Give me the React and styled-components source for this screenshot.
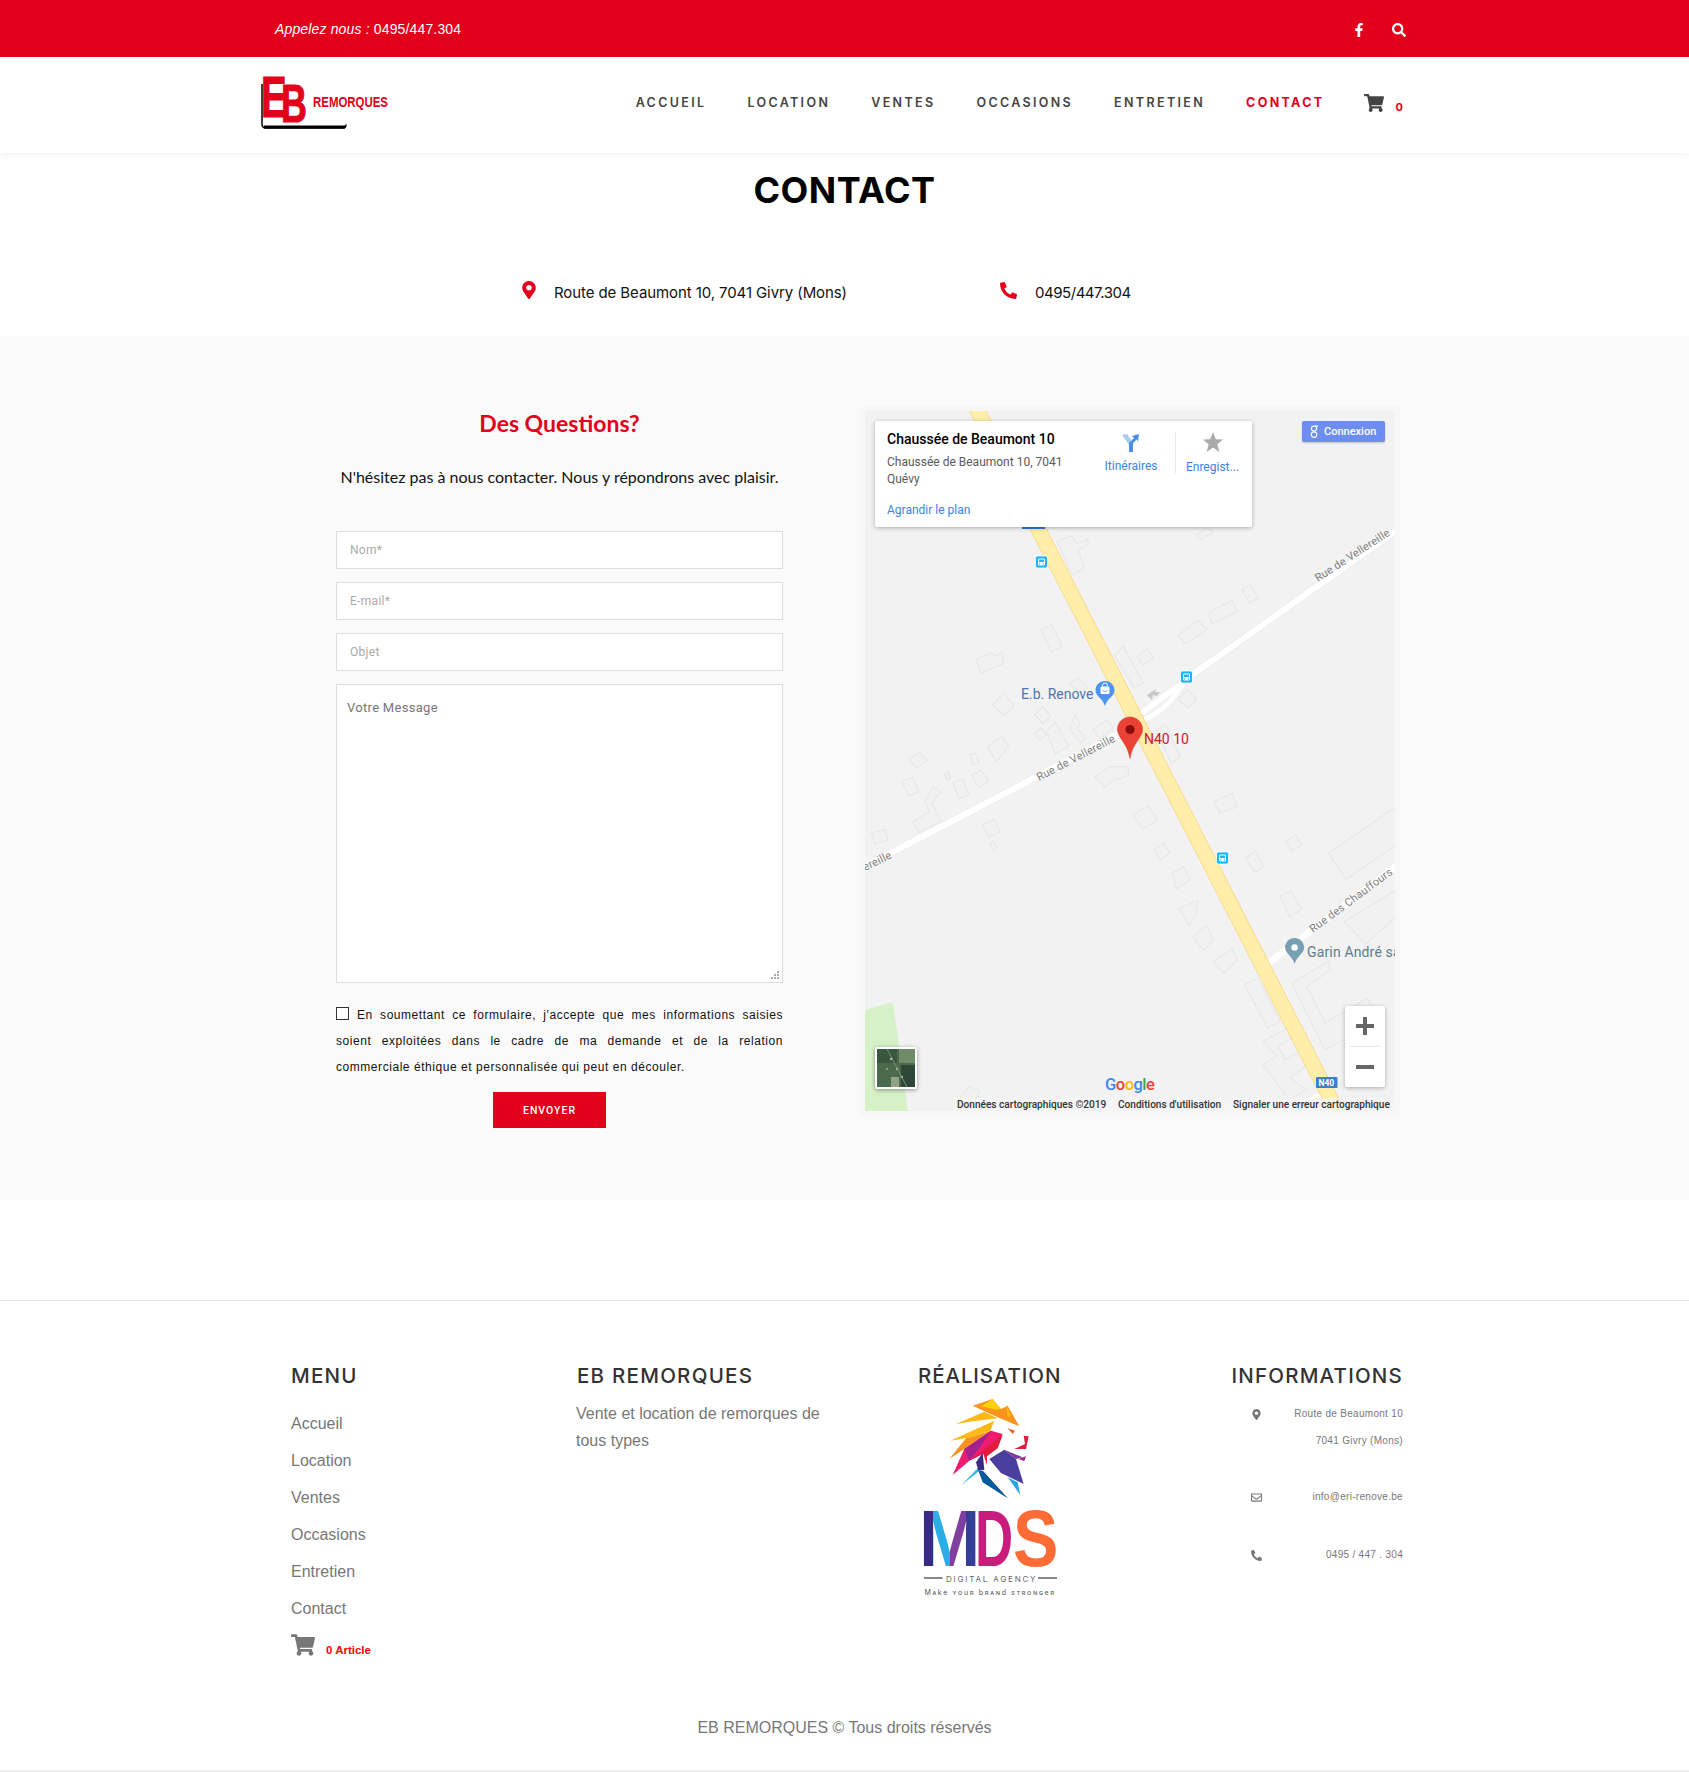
import React from "react";
import styled, { createGlobalStyle } from "styled-components";
import { FaFacebookF, FaSearch, FaShoppingCart, FaMapMarkerAlt, FaPhoneAlt, FaRegEnvelope } from "react-icons/fa";

const RED = "#e2001a";
const ARIAL = `"Liberation Sans", Arial, sans-serif`;
const GEO = `Inter, "Liberation Sans", sans-serif`;
const ROBOTO = `Roboto, "Liberation Sans", sans-serif`;

const Global = createGlobalStyle`
  html, body { margin: 0; padding: 0; background: #fff; font-family: ${ARIAL}; }
  * { box-sizing: border-box; }
`;

const TopBar = styled.div`
  height: 57px; background: ${RED}; color: #fff; display: flex; align-items: center;
  justify-content: space-between; padding: 0 283px 0 275px; font-size: 14px;
`;
const Phone = styled.div` em { font-style: italic; } letter-spacing: .15px; `;
const TopIcons = styled.div`
  display: flex; align-items: center; gap: 26px; font-size: 14px; margin-top: 3px;
  svg { display: block; }
`;
const Header = styled.header`
  height: 96px; background: #fff; box-shadow: 0 2px 6px rgba(0,0,0,.06); display: flex; align-items: center;
  padding: 0 286px 0 258px; position: relative;
`;
const Logo = styled.svg` width: 135px; height: 62px; display: block; margin-top: -8px; `;
const Nav = styled.nav` margin-left: auto; display: flex; align-items: center; gap: 41px; margin-top: -6px; `;
const NavLink = styled.a`
  font-family: ${GEO}; font-size: 12.5px; font-weight: 600; letter-spacing: 2.35px; color: ${p => (p.$active ? RED : "#444")};
  ${p => p.$active && "font-weight: 700;"}
`;
const NavCart = styled.div`
  display: flex; align-items: center; color: #444; font-size: 20px; margin-left: -2px;
  svg { display: block; margin-top: 2px; }
`;
const CartCount = styled.span` color: ${RED}; font: 700 11px ${GEO}; margin: 9px 0 0 12px; `;

const Title = styled.h1`
  margin: 15px 0 0; text-align: center; font-family: ${GEO}; font-weight: 700; font-size: 36px; line-height: 44px; color: #000;
  letter-spacing: .5px;
`;
const ContactRow = styled.div`
  margin-top: 68px; height: 24px; margin-bottom: 32px; display: flex; align-items: center; padding-left: 520px;
  font-family: ${GEO}; font-size: 15px; color: #111;
`;
const ContactItem = styled.div`
  display: flex; align-items: center; width: ${p => p.$w}px; letter-spacing: ${p => p.$ls}px;
`;
const ContactIcon = styled.span`
  color: ${RED}; font-size: ${p => p.$size}px; width: ${p => p.$w}px; flex: none; display: block; margin-top: -4px;
  svg { display: block; }
`;

const Gray = styled.section`
  height: 864px; background: #fafafa; padding: 70px 0 0 336px; display: flex; align-items: flex-start; gap: 77px;
`;
const FormCol = styled.form` width: 447px; display: flex; flex-direction: column; `;
const Questions = styled.h2`
  margin: 0; text-align: center; font-family: Lato, sans-serif; font-weight: 700; font-size: 23px; line-height: 34px; color: ${RED};
`;
const Lead = styled.p`
  margin: 25px 0 0; text-align: center; font-family: Lato, sans-serif; font-size: 16px; line-height: 24px; color: #111; white-space: nowrap;
`;
const Field = styled.input`
  height: 38px; width: 100%; border: 1px solid #ddd; background: #fff; padding: 0 13px; margin-top: ${p => p.$mt}px;
  font: 12px ${ROBOTO}; letter-spacing: .3px; outline: 0;
  &::placeholder { color: #aaa; opacity: 1; }
`;
const AreaWrap = styled.div` position: relative; margin-top: 13px; `;
const Area = styled.textarea`
  display: block; height: 299px; width: 100%; border: 1px solid #ddd; background: #fff; padding: 15px 10px; resize: none;
  font: 13px ${ROBOTO}; letter-spacing: .3px; outline: 0;
  &::placeholder { color: #777; opacity: 1; }
`;
const Grip = styled.svg` position: absolute; right: 3px; bottom: 3px; width: 9px; height: 9px; `;
const Consent = styled.label`
  display: block; margin-top: 19px; font: 12px/26px ${ARIAL}; letter-spacing: .55px; color: #111; text-align: justify;
`;
const Check = styled.input`
  appearance: none; width: 13px; height: 13px; border: 1px solid #333; background: #fff; margin: 0 8px 0 0; vertical-align: -1px; display: inline-block;
`;
const Send = styled.button`
  align-self: flex-start; margin: 12px 0 0 157px; width: 113px; height: 36px; border: 0; background: ${RED}; color: #fff;
  font: 500 10.5px ${ROBOTO}; letter-spacing: 1px;
`;

const MapOuter = styled.div` width: 540px; height: 710px; background: #f7f7f7; padding: 5px 5px 5px 5px; `;
const MapFrame = styled.div` position: relative; width: 530px; height: 700px; overflow: hidden; background: #f2f2f2; `;
const MapSvg = styled.svg` display: block; width: 530px; height: 700px; `;
const Label = styled.text`
  font-family: ${ROBOTO}; font-size: ${p => p.$size || 11}px; fill: ${p => p.$fill || "#7d7d7d"};
  letter-spacing: ${p => p.$ls || 0}px; font-weight: ${p => p.$w || 400};
`;
const Card = styled.div`
  position: absolute; left: 10px; top: 10px; width: 377px; height: 106px; background: #fff; border-radius: 2px;
  box-shadow: 0 1px 4px rgba(0,0,0,.3); display: flex; font-family: ${ROBOTO};
`;
const CardInfo = styled.div` width: 212px; padding: 9px 0 0 12px; `;
const CardTitle = styled.div` font-size: 14px; font-weight: 500; color: #000; line-height: 18px; `;
const CardAddr = styled.div` margin-top: 6px; font-size: 12px; line-height: 17px; color: #5b5b5b; width: 190px; `;
const CardLink = styled.div` margin-top: 14px; font-size: 12px; line-height: 17px; color: #3a84df; `;
const Action = styled.div`
  width: ${p => p.$w}px; height: 41px; margin-top: 11px; display: flex; flex-direction: column; align-items: center;
  color: #3a84df; font-size: 12px; ${p => p.$divider && "border-right: 1px solid #e6e6e6;"}
  span { margin-top: ${p => p.$gap || 7}px; line-height: 14px; white-space: nowrap; }
  svg { display: block; flex: none; }
`;
const Connect = styled.div`
  position: absolute; right: 10px; top: 10px; width: 83px; height: 21px; background: #6d8ef0; border-radius: 2px; color: #fff;
  box-shadow: 0 1px 2px rgba(0,0,0,.2); display: flex; align-items: center; gap: 6px; padding-left: 8px; font: 500 11px ${ROBOTO};
`;
const ZoomBox = styled.div`
  position: absolute; right: 10px; top: 595px; width: 40px; height: 81px; background: #fff; border-radius: 2px;
  box-shadow: 0 1px 4px rgba(0,0,0,.3); display: flex; flex-direction: column; align-items: center;
`;
const ZoomBtn = styled.div`
  width: 100%; height: 40px; display: flex; align-items: center; justify-content: center;
`;
const ZoomSep = styled.div` width: 30px; height: 1px; background: #e6e6e6; flex: none; `;
const Thumb = styled.div`
  position: absolute; left: 10px; top: 636px; width: 42px; height: 42px; background: #fff; border-radius: 2px; padding: 2px;
  box-shadow: 0 1px 4px rgba(0,0,0,.4);
  svg { display: block; width: 38px; height: 38px; }
`;
const Attribution = styled.div`
  position: absolute; right: 0; bottom: 0; height: 13px; width: 443px; background: rgba(245,245,245,.7); display: flex; padding-left: 5px;
  font: 500 10.1px/13px ${ROBOTO}; color: #333; white-space: nowrap;
`;
const AttrItem = styled.span` width: ${p => p.$w}px; flex: none; `;

const Spacer = styled.div` height: 101px; border-bottom: 1px solid #e6e6e6; `;
const Footer = styled.footer`
  display: grid; grid-template-columns: 286px 341px 200px 285px; padding: 61px 0 0 291px; height: 417px;
`;
const FootCol = styled.div` display: flex; flex-direction: column; ${p => p.$right && "align-items: flex-end;"} `;
const FootTitle = styled.h3`
  margin: 0; font-family: ${GEO}; font-size: 20.5px; font-weight: 500; line-height: 28px; color: #333; letter-spacing: ${p => p.$ls || 1.25}px; white-space: nowrap;
`;
const Menu = styled.ul` list-style: none; margin: 15px 0 0; padding: 0; `;
const MenuItem = styled.li` font-size: 16px; line-height: 37px; color: #777; `;
const FootCart = styled.div`
  display: flex; align-items: flex-end; margin-top: 6px; color: #777; font-size: 24px;
  svg { display: block; }
`;
const FootCartText = styled.span` color: #f00; font: 700 11.5px ${ARIAL}; margin-left: 11px; line-height: 13px; `;
const About = styled.p` margin: 10px 0 0 -1px; font-size: 16px; line-height: 27px; color: #777; width: 260px; `;
const McsLogo = styled.svg` display: block; width: 145px; height: 210px; margin-top: 4px; `;
const InfoRow = styled.div`
  width: 152px; display: flex; justify-content: space-between; align-items: flex-start; margin-top: ${p => p.$mt}px; color: #777;
`;
const InfoIcon = styled.span`
  font-size: 11px; line-height: 27px; svg { display: inline-block; vertical-align: middle; }
`;
const InfoText = styled.div` font-size: 10px; line-height: 27px; text-align: right; color: #777; letter-spacing: .3px; `;
const Copyright = styled.div`
  text-align: center; font-size: 16px; line-height: 20px; color: #777; height: 52px;
`;
const BottomRule = styled.div` height: 2px; background: #eee; `;

const zoomA = [
  "580,425 620,408 635,430 665,418 668,435 640,450 655,505 622,525",
  "535,690 565,675 595,740 565,757",
  "352,780 397,760 405,770 425,757 433,790 367,820",
  "400,915 430,880 460,920 430,948",
  "516,945 540,920 563,950 540,972",
  "550,995 575,965 612,1040 575,1062",
  "517,1000 535,985 550,1005 530,1020",
  "615,990 630,945 645,975 635,985 662,1015 645,1030",
  "680,990 720,960 737,985 700,1018",
  "385,1040 425,1010 445,1040 410,1085",
  "165,1080 195,1058 217,1082 185,1105",
  "335,1065 350,1060 363,1090 345,1095",
  "740,765 765,740 822,850 795,865",
  "803,770 832,748 850,775 820,795",
  "920,705 975,660 1000,690 940,733",
  "1002,640 1070,602 1085,635 1015,672",
  "1097,570 1122,553 1143,595 1120,610",
  "918,898 945,870 970,898 945,925",
  "970,405 1000,385 1018,395 985,418",
  "615,850 640,835 665,865 640,880",
  "855,990 885,975 925,1070 900,1090",
];
const zoomB = [
  "145,35 175,22 193,65 165,78",
  "60,190 98,178 105,210 70,222",
  "288,38 315,28 333,75 305,85",
  "340,15 368,0 387,35 360,52",
  "265,10 275,5 282,25 270,30",
  "177,155 222,125 210,95 232,50 255,65 230,100 255,155 192,187",
  "370,165 403,147 420,185 390,202",
  "392,222 402,215 412,235 403,243",
  "685,20 730,-10 780,-10 780,15 750,30 745,25 715,52",
  "793,135 835,107 862,150 820,178",
  "852,240 880,220 895,250 870,270",
  "902,310 935,290 953,330 915,357",
  "1020,95 1070,70 1085,110 1035,130",
  "1108,265 1135,243 1160,290 1133,307",
  "1220,215 1250,195 1265,225 1238,243",
  "922,415 975,393 968,440 948,467",
  "960,500 1000,467 1017,510 990,542",
  "1017,575 1070,537 1085,570 1047,611",
  "1205,380 1235,363 1265,420 1232,442",
  "1105,645 1143,625 1205,755 1170,775",
  "1340,250 1530,110 1530,225 1390,328",
  "1385,455 1530,360 1530,440 1445,522",
  "1237,640 1340,575 1345,600 1280,650 1330,760 1450,685 1480,760 1330,840",
  "1157,815 1228,775 1240,805 1200,830 1220,870 1265,842 1290,880 1230,925 1280,960 1230,990 1157,885 1195,860",
  "310,980 335,950 363,965 345,1000 310,1030",
];

const BusStop = ({ x, y }) => (
  <g transform={`translate(${x - 6} ${y - 6})`}>
    <rect width="12" height="12" rx="2" fill="#1ab5f5" stroke="#fff" strokeWidth=".8" />
    <rect x="2.5" y="2.5" width="7" height="7" rx="1.2" fill="#fff" />
    <rect x="3.5" y="3.5" width="5" height="2.5" fill="#1ab5f5" />
    <circle cx="4.2" cy="8" r=".7" fill="#1ab5f5" />
    <circle cx="7.8" cy="8" r=".7" fill="#1ab5f5" />
  </g>
);

const MapDrawing = () => (
  <MapSvg viewBox="865 411 530 700">
    <rect x="865" y="411" width="530" height="700" fill="#f2f2f2" />
    <polygon points="865,1010 893,1002 908,1111 865,1111" fill="#d6f0c8" />
    <g fill="#f1f1f1" stroke="#e6e6e6" strokeWidth="3" transform="translate(850 400) scale(.357 .333)">
      {zoomA.map(p => <polygon key={p} points={p} />)}
    </g>
    <g fill="#f1f1f1" stroke="#e6e6e6" strokeWidth="3" transform="translate(850 770) scale(.357 .333)">
      {zoomB.map(p => <polygon key={p} points={p} />)}
    </g>
    <g fill="none" strokeLinecap="round">
      <path d="M860 869 L1136 725" strokeWidth="7.500" stroke="#e8e8e8" />
      <path d="M860 869 L1136 725" strokeWidth="6.500" stroke="#fff" />
      <path d="M1143 712 L1176 688 Q1186 680 1196 672 L1400 528" strokeWidth="7" stroke="#e8e8e8" />
      <path d="M1143 712 L1176 688 Q1186 680 1196 672 L1400 528" strokeWidth="6" stroke="#fff" />
      <path d="M1139 722 Q1165 712 1180 688 L1192 674" strokeWidth="4.500" stroke="#fff" />
      <path d="M1270 962 L1400 863" strokeWidth="6.500" stroke="#fff" />
      <path d="M1280 1111 L1330 1092" strokeWidth="5" stroke="#fff" />
    </g>
    <path d="M972 400 L1342 1121" stroke="#f8d67d" strokeWidth="15.500" fill="none" />
    <path d="M972 400 L1342 1121" stroke="#ffedaa" strokeWidth="14" fill="none" />
    <polygon points="1147,695 1156,689 1155,692 1160,692 1157,696 1153,695 1152,700" fill="#c8c8c8" />
    <BusStop x={1041.5} y={562} />
    <BusStop x={1186.5} y={677} />
    <BusStop x={1222.5} y={858} />
    <Label transform="translate(1318 582) rotate(-33)" $ls=".2">Rue de Vellereille</Label>
    <Label transform="translate(1039 781) rotate(-27.5)" $ls=".2">Rue de Vellereille</Label>
    <Label transform="translate(865 871) rotate(-26)" $ls=".2">ereille</Label>
    <Label transform="translate(1313 933) rotate(-36.5)" $ls=".2">Rue des Chauffours</Label>
    <Label transform="translate(1298 1110) rotate(-22)" $fill="#a8a8a8" $size="10">de</Label>
    <Label x="1021" y="699" $size="14" $fill="#4a76b8">E.b. Renove</Label>
    <Label x="1144" y="744" $size="14" $fill="#c5221f">N40 10</Label>
    <Label x="1307" y="957" $size="14" $fill="#607d8b" $ls=".15">Garin André sa</Label>
    <path d="M1105 681c-5.200 0-9.500 4-9.500 9.200 0 6.300 7.500 7.800 9.500 16 2-8.200 9.500-9.700 9.500-16 0-5.200-4.300-9.200-9.500-9.200z" fill="#4d94ee" />
    <rect x="1100.500" y="686.500" width="9" height="7.500" rx="1" fill="#fff" />
    <path d="M1102.500 686.500v-1a2.500 2.500 0 0 1 5 0v1" fill="none" stroke="#fff" />
    <path d="M1102.500 690.500q2.500 2 5 0" fill="none" stroke="#4d94ee" strokeWidth=".8" />
    <path d="M1294.600 938c-5.200 0-9.500 4-9.500 9.400 0 6.300 7.500 8.400 9.500 16.600 2-8.200 9.500-10.300 9.500-16.600 0-5.400-4.300-9.400-9.500-9.400z" fill="#78a0b4" />
    <circle cx="1294.600" cy="947.500" r="3.200" fill="#fff" />
    <path d="M1130 717c-6.900 0-12.500 5.400-12.500 12.200 0 8.900 9.900 13.400 12.500 29.300 2.600-15.900 12.500-20.400 12.500-29.300 0-6.800-5.600-12.200-12.500-12.200z" fill="#ea4335" stroke="#d5332a" strokeWidth=".5" />
    <circle cx="1130" cy="729.500" r="4.600" fill="#8c0c0c" />
    <rect x="1022" y="525" width="23" height="4" fill="#3a78cc" />
    <rect x="1316" y="1077" width="21.500" height="11" rx="1" fill="#3c7fcf" />
    <Label x="1318.500" y="1086" $size="8.500" $fill="#fff" $w="700">N40</Label>
    <Label x="1105" y="1090" $size="16.500" $ls="-.5" $w="500">
      <tspan fill="#4285f4">G</tspan><tspan fill="#ea4335">o</tspan><tspan fill="#fbbc05">o</tspan><tspan fill="#4285f4">g</tspan><tspan fill="#34a853">l</tspan><tspan fill="#ea4335">e</tspan>
    </Label>
  </MapSvg>
);

const Satellite = () => (
  <svg viewBox="0 0 38 38">
    <rect width="38" height="38" fill="#4b6b4c" />
    <rect x="22" width="16" height="14" fill="#6f8b68" />
    <rect y="0" width="20" height="14" fill="#39563f" />
    <rect y="26" x="0" width="14" height="12" fill="#4a6a4d" />
    <rect y="28" x="14" width="8" height="10" fill="#93a285" />
    <rect y="16" x="24" width="14" height="22" fill="#2f4736" />
    <path d="M10 0 L30 38" stroke="#7d8b7c" strokeWidth="1" />
    <circle cx="14" cy="10" r="1.200" fill="#aeb7a9" /><circle cx="20" cy="20" r="1.200" fill="#a5afa0" />
    <circle cx="10" cy="20" r="1" fill="#98a495" /><circle cx="25" cy="28" r="1.200" fill="#aab3a5" />
  </svg>
);

const MapPanel = () => (
  <MapOuter>
    <MapFrame>
      <MapDrawing />
      <Card>
        <CardInfo>
          <CardTitle>Chaussée de Beaumont 10</CardTitle>
          <CardAddr>Chaussée de Beaumont 10, 7041 Quévy</CardAddr>
          <CardLink>Agrandir le plan</CardLink>
        </CardInfo>
        <Action $w={89} $divider>
          <svg width="20" height="20" viewBox="0 0 20 20">
            <path d="M1 3 L6 2 L12 11 L12 20 L8 20 L8 12.500 Z" fill="#a6c8f2" />
            <path d="M8 20 L8 11 L13 6 L11 4 L18 2 L17 9.500 L15.500 7.500 L12 11.500 L12 20 Z" fill="#4a8fe7" />
          </svg>
          <span>Itinéraires</span>
        </Action>
        <Action $w={73} $gap={8}>
          <svg width="22" height="20" viewBox="0 0 22 20"><polygon points="11,0 13.800,7.200 21,7.600 15.300,12.200 17.300,20 11,15.600 4.700,20 6.700,12.200 1,7.600 8.200,7.200" fill="#aaa" /></svg>
          <span>Enregist...</span>
        </Action>
      </Card>
      <Connect>
        <svg width="8" height="13" viewBox="0 0 8 13" fill="none" stroke="#fff" strokeWidth="1.200">
          <circle cx="4" cy="3.600" r="2.600" /><circle cx="4" cy="9.600" r="2.800" /><path d="M5 1h3" />
        </svg>
        Connexion
      </Connect>
      <ZoomBox>
        <ZoomBtn><svg width="18" height="18" viewBox="0 0 18 18"><path d="M7 0h4v7h7v4h-7v7H7v-7H0V7h7z" fill="#666" /></svg></ZoomBtn>
        <ZoomSep />
        <ZoomBtn><svg width="18" height="4" viewBox="0 0 18 4"><rect width="18" height="4" fill="#666" /></svg></ZoomBtn>
      </ZoomBox>
      <Thumb><Satellite /></Thumb>
      <Attribution>
        <AttrItem $w={161}>Données cartographiques ©2019</AttrItem>
        <AttrItem $w={115}>Conditions d'utilisation</AttrItem>
        <AttrItem>Signaler une erreur cartographique</AttrItem>
      </Attribution>
    </MapFrame>
  </MapOuter>
);

const lionPolys = [
  ["#f7941d", "215,170 275,150 300,180 320,170 355,232 290,205"],
  ["#fdd00a", "240,172 275,150 300,180 285,182"],
  ["#fdb913", "315,168 330,200 320,205"],
  ["#fdb913", "163,226 250,188 290,208 205,218"],
  ["#fdb913", "148,275 280,215 268,245 195,268"],
  ["#f7941d", "145,330 195,268 270,245 190,300"],
  ["#ed1c6f", "155,378 190,300 270,245 305,255 282,298 205,335"],
  ["#a3218e", "190,300 270,245 240,290 205,335"],
  ["#e31b3c", "205,335 305,258 290,298 258,322 258,348 246,312"],
  ["#4b3f9e", "265,330 310,302 345,330 368,405 300,372"],
  ["#7a3b98", "310,302 365,325 345,330"],
  ["#29b5e8", "182,408 245,342 234,366"],
  ["#3a2a86", "225,340 245,312 250,362 232,365"],
  ["#7a3b98", "245,365 320,448 250,385"],
  ["#005b9a", "232,365 245,365 320,448 245,400"],
  ["#29a7e0", "320,385 350,400 358,438"],
  ["#e31b3c", "340,300 375,300 383,262 368,260 372,285"],
  ["#f26522", "320,238 342,245 335,255"],
  ["#a3218e", "352,330 375,322 370,336"],
];

const MdsLogo = () => (
  <McsLogo viewBox="917 1395 145 210">
    <defs>
      <linearGradient id="mGrad" x1="0" x2="1" y1="0" y2="0">
        <stop offset="0.235" stopColor="#3a2a86" /><stop offset="0.235" stopColor="#29aee6" />
        <stop offset="0.5" stopColor="#29aee6" /><stop offset="0.5" stopColor="#7f3f9e" />
        <stop offset="0.76" stopColor="#7f3f9e" /><stop offset="0.76" stopColor="#343e96" />
      </linearGradient>
    </defs>
    <g transform="translate(900 1350) scale(.3333)">
      {lionPolys.map(([c, p]) => <polygon key={p} points={p} fill={c} />)}
    </g>
    <g fontFamily="Liberation Sans, sans-serif" fontWeight="700" fontSize="80">
      <text transform="translate(918 1567) scale(.92 1)" fill="url(#mGrad)">M</text>
      <text transform="translate(974 1567) scale(.66 1)" fill="#c91c7d">D</text>
      <text transform="translate(1012 1567) scale(.85 1)" fill="#ff6b35">S</text>
    </g>
    <rect x="923" y="1578" width="18.500" height="2" fill="#888" />
    <rect x="1037" y="1578" width="19" height="2" fill="#888" />
    <text x="945" y="1583" fontFamily="Inter, sans-serif" fontSize="8" letterSpacing="1.800" fill="#666">DIGITAL AGENCY</text>
    <text x="923.500" y="1596" fontFamily="Inter, sans-serif" fontSize="7" fontVariant="small-caps" letterSpacing="1.650" fill="#555">Make your brand stronger</text>
  </McsLogo>
);

export default function App() {
  return (
    <>
      <Global />
      <TopBar>
        <Phone><em>Appelez nous :</em> 0495/447.304</Phone>
        <TopIcons><FaFacebookF /><FaSearch /></TopIcons>
      </TopBar>
      <Header>
        <Logo viewBox="258 70 135 62">
          <path d="M262 84 V124 Q262 128 266 128 H343 Q346 128 346 124.500" fill="none" stroke="#000" strokeWidth="1.500" />
          <path d="M264 125.500 H345 V128.500 H264 Z" fill="#000" />
          <g fontFamily="Liberation Sans, sans-serif" fontWeight="700" fontSize="58" fill="#e2001a" stroke="#e2001a" strokeWidth="1.200">
            <text transform="translate(261 117) scale(.66 1)">E</text>
            <text transform="translate(281 122) scale(.62 .94)">B</text>
          </g>
          <text transform="translate(313 107) scale(.79 1)" fontFamily="Liberation Sans, sans-serif" fontWeight="700" fontSize="14.500" fill="#e2001a">REMORQUES</text>
        </Logo>
        <Nav>
          <NavLink>ACCUEIL</NavLink>
          <NavLink>LOCATION</NavLink>
          <NavLink>VENTES</NavLink>
          <NavLink>OCCASIONS</NavLink>
          <NavLink>ENTRETIEN</NavLink>
          <NavLink $active>CONTACT</NavLink>
          <NavCart><FaShoppingCart /><CartCount>0</CartCount></NavCart>
        </Nav>
      </Header>
      <Title>CONTACT</Title>
      <ContactRow>
        <ContactItem $w={480} $ls={-0.09}>
          <ContactIcon $size={18} $w={34}><FaMapMarkerAlt /></ContactIcon>
          Route de Beaumont 10, 7041 Givry (Mons)
        </ContactItem>
        <ContactItem $ls={-0.47}>
          <ContactIcon $size={17} $w={35}><FaPhoneAlt /></ContactIcon>
          0495/447.304
        </ContactItem>
      </ContactRow>
      <Gray>
        <FormCol>
          <Questions>Des Questions?</Questions>
          <Lead>N'hésitez pas à nous contacter. Nous y répondrons avec plaisir.</Lead>
          <Field $mt={42} placeholder="Nom*" />
          <Field $mt={13} placeholder="E-mail*" />
          <Field $mt={13} placeholder="Objet" />
          <AreaWrap>
            <Area placeholder="Votre Message" />
            <Grip viewBox="0 0 9 9" fill="#aaa">
              <rect x="6" y="0" width="2" height="2" /><rect x="3" y="3" width="2" height="2" /><rect x="6" y="3" width="2" height="2" />
              <rect x="0" y="6" width="2" height="2" /><rect x="3" y="6" width="2" height="2" /><rect x="6" y="6" width="2" height="2" />
            </Grip>
          </AreaWrap>
          <Consent><Check type="checkbox" />En soumettant ce formulaire, j'accepte que mes informations saisies soient exploitées dans le cadre de ma demande et de la relation commerciale éthique et personnalisée qui peut en découler.</Consent>
          <Send type="button">ENVOYER</Send>
        </FormCol>
        <MapPanel />
      </Gray>
      <Spacer />
      <Footer>
        <FootCol>
          <FootTitle>MENU</FootTitle>
          <Menu>
            {["Accueil", "Location", "Ventes", "Occasions", "Entretien", "Contact"].map(m => <MenuItem key={m}>{m}</MenuItem>)}
          </Menu>
          <FootCart><FaShoppingCart /><FootCartText>0 Article</FootCartText></FootCart>
        </FootCol>
        <FootCol>
          <FootTitle>EB REMORQUES</FootTitle>
          <About>Vente et location de remorques de tous types</About>
        </FootCol>
        <FootCol>
          <FootTitle $ls={.9}>RÉALISATION</FootTitle>
          <MdsLogo />
        </FootCol>
        <FootCol $right>
          <FootTitle $ls={1.2}>INFORMATIONS</FootTitle>
          <InfoRow $mt={10}><InfoIcon><FaMapMarkerAlt /></InfoIcon><InfoText>Route de Beaumont 10<br />7041 Givry (Mons)</InfoText></InfoRow>
          <InfoRow $mt={29}><InfoIcon><FaRegEnvelope /></InfoIcon><InfoText>info@eri-renove.be</InfoText></InfoRow>
          <InfoRow $mt={31}><InfoIcon><FaPhoneAlt /></InfoIcon><InfoText>0495 / 447 . 304</InfoText></InfoRow>
        </FootCol>
      </Footer>
      <Copyright>EB REMORQUES © Tous droits réservés</Copyright>
      <BottomRule />
    </>
  );
}
